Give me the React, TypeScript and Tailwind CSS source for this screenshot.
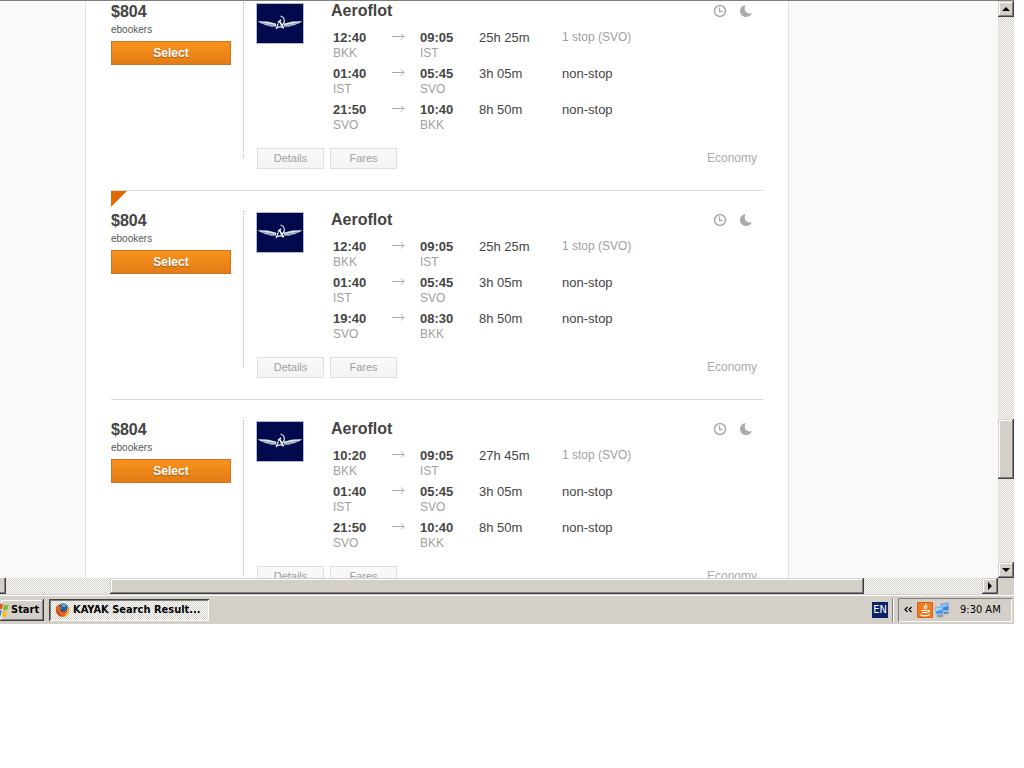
type Leg = {
  depart: string;
  from: string;
  arrive: string;
  to: string;
  duration: string;
  stops: string;
};

type Result = { id: number; price: string; site: string; flagged?: boolean; legs: Leg[] };

const middleLeg: Leg = { depart: "01:40", from: "IST", arrive: "05:45", to: "SVO", duration: "3h 05m", stops: "non-stop" };

const results: Result[] = [
  {
    id: 1,
    price: "$804",
    site: "ebookers",
    legs: [
      { depart: "12:40", from: "BKK", arrive: "09:05", to: "IST", duration: "25h 25m", stops: "1 stop (SVO)" },
      middleLeg,
      { depart: "21:50", from: "SVO", arrive: "10:40", to: "BKK", duration: "8h 50m", stops: "non-stop" },
    ],
  },
  {
    id: 2,
    price: "$804",
    site: "ebookers",
    flagged: true,
    legs: [
      { depart: "12:40", from: "BKK", arrive: "09:05", to: "IST", duration: "25h 25m", stops: "1 stop (SVO)" },
      middleLeg,
      { depart: "19:40", from: "SVO", arrive: "08:30", to: "BKK", duration: "8h 50m", stops: "non-stop" },
    ],
  },
  {
    id: 3,
    price: "$804",
    site: "ebookers",
    legs: [
      { depart: "10:20", from: "BKK", arrive: "09:05", to: "IST", duration: "27h 45m", stops: "1 stop (SVO)" },
      middleLeg,
      { depart: "21:50", from: "SVO", arrive: "10:40", to: "BKK", duration: "8h 50m", stops: "non-stop" },
    ],
  },
];

function AirlineLogo() {
  return (
    <svg width="48" height="41" viewBox="0 0 48 41" role="img" aria-label="Aeroflot" className="shrink-0">
      <rect width="48" height="41" fill="#b4b9d3" />
      <rect x="1" y="1" width="46" height="39" fill="#000a4c" />
      <g fill="#e4ebee">
        <path d="M1.5 18.200l10 .3 9 2.300-1 3-5-.2-5-1.600-5-2z" />
        <path d="M46.500 18.200l-10 .3-9 2.300 1 3 5-.2 5-1.600 5-2z" />
      </g>
      <path d="M6 20l13 2.300M11 22.200l8 1.300M42 20l-13 2.300M37 22.200l-8 1.300" stroke="#66789a" strokeWidth="0.700" fill="none" />
      <path d="M24.500 13c3 .7 4.300 3.500 3.700 6-.4 1.800-1.700 3-3.700 3.300" stroke="#eef3f8" strokeWidth="1.100" fill="none" />
      <path d="M22 19.500l3-2.800M23.500 18.200l4 6.800" stroke="#fff" strokeWidth="1.500" fill="none" />
      <path d="M22.500 20.500c-1.500 1.500-1 3-2.500 5.500M20.500 25c2-1.200 5.500-1.200 7.500 0" stroke="#eef3f8" strokeWidth="1.200" fill="none" />
    </svg>
  );
}

function ClockIcon() {
  return (
    <svg width="14" height="14" viewBox="0 0 14 14" fill="none" stroke="#aaa" role="img" aria-label="Long flight">
      <circle cx="7" cy="7" r="5.5" strokeWidth="1.500" />
      <path d="M6.500 3.500v4h3" strokeWidth="1.300" />
    </svg>
  );
}

function MoonIcon() {
  return (
    <svg width="14" height="14" viewBox="0 0 14 14" role="img" aria-label="Overnight flight">
      <path d="M6.500 1C3.200 1.300 1 4 1 7c0 3.400 2.800 6 6 6 2.700 0 5-1.500 6-4-4.500 2.200-9.300-2.500-6.500-8z" fill="#aaa" />
    </svg>
  );
}

function LegArrow() {
  return (
    <svg width="13" height="8" viewBox="0 0 13 8" fill="none" stroke="#aaa" aria-hidden="true" className="mt-[3px] ml-px">
      <path d="M0 4.500h12M9 1.500l3 3-3 3" />
    </svg>
  );
}

function SmallButton({ label }: { label: string }) {
  return (
    <button className="h-[21px] w-[67px] border border-[#dedede] bg-linear-to-b from-[#fafafa] to-[#f3f3f3] text-[11px] leading-[19px] text-[#a0a0a0]">
      {label}
    </button>
  );
}

function ResultCard({ result }: { result: Result }) {
  return (
    <article className="relative flex border-b border-[#d9d9d9] pt-4 pb-[21px]">
      {result.flagged && (
        <svg width="16" height="16" viewBox="0 0 16 16" className="absolute top-0 left-0" aria-hidden="true">
          <path d="M0 0h16L0 16z" fill="#dd6b05" />
        </svg>
      )}
      <div className="w-[120px] shrink-0 pt-1">
        <div className="text-base leading-[20px] font-bold text-[#444]">{result.price}</div>
        <div className="text-[10px] leading-4 text-[#555]">{result.site}</div>
        <button className="mt-[3px] h-6 w-full border border-[#cb7426] bg-linear-to-b from-[#f9921c] to-[#e27c15] text-xs leading-[22px] font-bold text-white [text-shadow:0_1px_1px_#a85a10]">
          Select
        </button>
      </div>
      <div className="mt-1 mb-[11px] ml-3 border-l border-dotted border-[#bbb]" />
      <div className="ml-3 min-w-0 flex-1">
        <div className="flex">
          <div className="pt-[5px]">
            <AirlineLogo />
          </div>
          <div className="ml-[27px] flex-1">
            <div className="flex items-center justify-between pr-[10px]">
              <h2 className="text-base leading-[26px] font-bold text-[#444]">Aeroflot</h2>
              <div className="flex gap-3">
                <ClockIcon />
                <MoonIcon />
              </div>
            </div>
            <table className="mt-[5px] ml-0.5 w-full table-fixed border-collapse text-left text-[13px] leading-[18px] text-[#444]">
              <colgroup>
                <col className="w-[58px]" />
                <col className="w-[29px]" />
                <col className="w-[59px]" />
                <col className="w-[83px]" />
                <col />
              </colgroup>
              <tbody>
                {result.legs.map((leg) => (
                  <tr key={leg.depart} className="h-9 align-top">
                    <td className="p-0">
                      <div className="font-bold">{leg.depart}</div>
                      <div className="text-xs leading-[12px] text-[#a0a0a0]">{leg.from}</div>
                    </td>
                    <td className="p-0">
                      <LegArrow />
                    </td>
                    <td className="p-0">
                      <div className="font-bold">{leg.arrive}</div>
                      <div className="text-xs leading-[12px] text-[#a0a0a0]">{leg.to}</div>
                    </td>
                    <td className="p-0">{leg.duration}</td>
                    <td className="p-0">
                      {leg.stops === "non-stop" ? (
                        leg.stops
                      ) : (
                        <div className="text-xs leading-4 text-[#a0a0a0]">{leg.stops}</div>
                      )}
                    </td>
                  </tr>
                ))}
              </tbody>
            </table>
          </div>
        </div>
        <div className="mt-[11px] flex items-center gap-1.5 pr-1.5 pl-px">
          <SmallButton label="Details" />
          <SmallButton label="Fares" />
          <span className="ml-auto text-xs leading-[21px] text-[#aaa]">Economy</span>
        </div>
      </div>
    </article>
  );
}

const dither = "bg-[conic-gradient(#fff_25%,#d4d0c8_0_50%,#fff_0_75%,#d4d0c8_0)] bg-[length:2px_2px]";
const raised =
  "bg-[#d4d0c8] shadow-[inset_-1px_-1px_#404040,inset_1px_1px_#d4d0c8,inset_-2px_-2px_#808080,inset_2px_2px_#fff]";

function ScrollButton({ label, path }: { label: string; path: string }) {
  return (
    <button aria-label={label} className={`flex size-4 shrink-0 items-center justify-center ${raised}`}>
      <svg width="8" height="8" viewBox="0 0 8 8" aria-hidden="true">
        <path d={path} fill="#000" />
      </svg>
    </button>
  );
}

function WindowsFlag() {
  return (
    <svg width="9" height="16" viewBox="0 0 9 16" aria-hidden="true">
      <path d="M0 2c1-.8 2-.6 3 0L2 7.500C1.300 7 .7 7 0 7.200z" fill="#e0561f" />
      <path d="M4 2.500c1.500.8 3 .8 4.700 0L7.500 7.800c-1.600.8-3 .8-4.500 0z" fill="#7dbb32" />
      <path d="M0 8.500c.7-.3 1.200-.2 1.800.2L.8 13.500 0 13.300z" fill="#3f78d2" />
      <path d="M2.800 9c1.500.8 3 .8 4.500 0L6 14.200c-1.600.8-3 .8-4.300 0z" fill="#f4c021" />
    </svg>
  );
}

function FirefoxIcon() {
  return (
    <svg width="14" height="16" viewBox="0 0 15 16" aria-hidden="true">
      <circle cx="8" cy="8" r="7" fill="#e2571c" />
      <circle cx="8.800" cy="6.200" r="5.200" fill="#235d98" />
      <path d="M6 2.500c2-1.500 5-1 6.500 1l-2 1.500-3-.5z" fill="#5aa8d2" />
      <path d="M1.500 3.500c1 .6 2 .6 3 .5 1 .3 2 1 2.800 1.800L5.500 7.500c.3 2.500 3 3.500 5 2.500 2-1 3-3 2.500-5.500 2 2 2.400 5 1 7.500-2 3.500-7 4.500-10.300 1.800C1 11.500.3 7 1.500 3.500z" fill="#e8641b" />
      <path d="M13 4.500c2 2 2.400 5 1 7.500-1 1.800-3 3-5 3 3-1.500 5-5 4-10.500z" fill="#f6b52c" />
      <path d="M2 6c0 4 2 7 6 8.500C4 14.500 1 11 2 6z" fill="#b22b16" />
    </svg>
  );
}

function JavaIcon() {
  return (
    <svg width="16" height="16" viewBox="0 0 16 16" role="img" aria-label="Java">
      <rect width="16" height="16" rx="1" fill="#d95f12" />
      <rect x="1" y="1" width="14" height="14" fill="#f07a1e" />
      <g fill="none" stroke="#fff" strokeWidth="1.200">
        <path d="M9 1.500c.8 2-3 2.800-1.500 5.500M10.500 4c-2 .8-1.500 2-1.300 3" />
        <path d="M4.500 8.500h6M5 10.500h5M11 8.500c2-.3 1.500 1.700-.8 2M3 12.800c3 1.200 7.500 1 10-.3" />
      </g>
    </svg>
  );
}

function NetworkIcon() {
  return (
    <svg width="16" height="16" viewBox="0 0 16 16" role="img" aria-label="Network">
      <path d="M6.500 1.500l8-1 .8 8-7.500.7z" fill="#7fa9dd" />
      <path d="M7.500 2.400l6.200-.8.6 6-6 .6z" fill="#2f86e4" />
      <path d="M7.600 2.500l6-.8.2 2.300-6 2z" fill="#8cc6f8" />
      <path d="M9 10l5-.5 1.300 2-5.300.8z" fill="#7189b0" />
      <path d="M.8 5l8-1 .8 8-7.600.7z" fill="#86aee0" />
      <path d="M1.800 5.900l6.200-.8.6 6-6 .6z" fill="#3f95ee" />
      <path d="M1.900 6l6-.8.2 2.300-6 2z" fill="#a4d4fb" />
      <path d="M3 13l5.500-.5 1.500 2-6.500 1z" fill="#8299bd" />
    </svg>
  );
}

export default function App() {
  return (
    <div className="min-h-screen bg-white pr-[10px] font-['Liberation_Sans',Arial,sans-serif]">
      <div className="flex h-[578px]">
        <main className="min-w-0 flex-1 overflow-hidden border-t border-[#808080] bg-[#f9f9f9]">
          <section aria-label="Flight results" className="ml-[85px] max-w-[704px] border-x border-[#e2e2e2] bg-white pr-[25px] pl-[25px]">
            <div className="-mt-[19px]">
              {results.map((result) => (
                <ResultCard key={result.id} result={result} />
              ))}
            </div>
          </section>
        </main>
        <div className={`flex w-4 shrink-0 flex-col border-t border-[#808080] ${dither}`}>
          <ScrollButton label="Scroll up" path="M4 2l4 4H0z" />
          <div className="flex-[402]" />
          <div className={`flex-[60] ${raised}`} />
          <div className="flex-[83]" />
          <ScrollButton label="Scroll down" path="M0 2h8L4 6z" />
        </div>
      </div>

      <div className="flex h-4 bg-[#d4d0c8] pr-4">
        <div className={`flex flex-1 ${dither}`}>
          <div className="w-1.5 bg-[#d4d0c8] shadow-[inset_-1px_-1px_#404040,inset_-2px_-2px_#808080]" />
          <div className="flex-[104]" />
          <div className={`flex-[754] ${raised}`} />
          <div className="flex-[118]" />
          <ScrollButton label="Scroll right" path="M2 0l4 4-4 4z" />
        </div>
      </div>

      <footer className="flex h-[30px] items-center border-t border-[#d4d0c8] bg-[#d4d0c8] font-['DejaVu_Sans_Condensed','DejaVu_Sans',sans-serif] text-[11px] text-black shadow-[inset_0_1px_#fff]">
        <button className={`flex h-[22px] w-11 items-center gap-0.5 font-bold ${raised}`}>
          <WindowsFlag />
          <span className="pt-0.5">Start</span>
        </button>
        <button
          className={`ml-[5px] flex h-[22px] w-40 items-center gap-1 pl-1.5 font-bold whitespace-nowrap shadow-[inset_1px_1px_#404040,inset_-1px_-1px_#fff,inset_2px_2px_#808080] ${dither}`}
        >
          <FirefoxIcon />
          <span className="pt-0.5">KAYAK Search Result...</span>
        </button>
        <span className="ml-auto flex size-4 items-center justify-center bg-[#0a246a] pt-0.5 text-white">EN</span>
        <div className="ml-1 h-6 w-0.5 border-r border-l border-r-white border-l-[#808080]" />
        <div className="ml-1 mr-0.5 flex h-6 w-[114px] items-center pl-1.5 shadow-[inset_1px_1px_#808080,inset_-1px_-1px_#fff]">
          <svg width="8" height="7" viewBox="0 0 8 7" fill="none" stroke="#000" strokeWidth="1.200" role="img" aria-label="Show hidden icons">
            <path d="M3.500 1L1 3.500 3.500 6M7.500 1L5 3.500 7.500 6" />
          </svg>
          <span className="ml-[5px] flex gap-px">
            <JavaIcon />
            <NetworkIcon />
          </span>
          <span className="ml-2.5 pt-0.5 whitespace-nowrap">9:30 AM</span>
        </div>
      </footer>
    </div>
  );
}
